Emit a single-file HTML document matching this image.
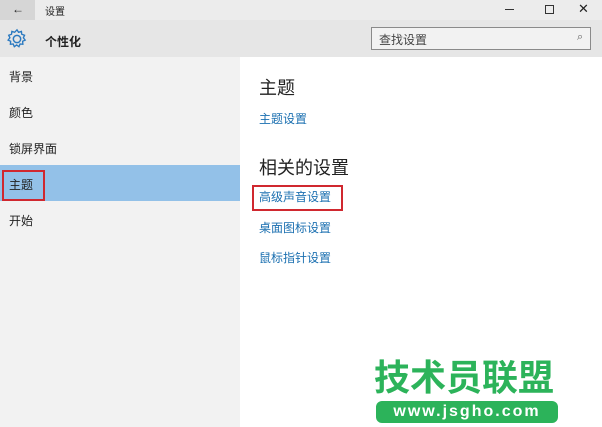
<!DOCTYPE html>
<html><head><meta charset="utf-8"><style>
body{margin:0;width:602px;height:427px;overflow:hidden;position:relative;background:#fff;font-family:"Liberation Sans","Noto Sans CJK SC",sans-serif;}
div{position:absolute;}
.t{font-size:12px;color:#222;white-space:nowrap;}
.l{font-size:12px;color:#1a6fb0;white-space:nowrap;}
</style></head><body>
<div style="left:0;top:0;width:602px;height:20px;background:#ececec"></div>
<div style="left:0;top:0;width:35px;height:20px;background:#d6d6d6"></div>
<div class="t" style="left:12px;top:2px;font-size:12px">←</div>
<div class="t" style="left:45px;top:3px;font-size:10px">设置</div>
<div style="left:505px;top:9px;width:9px;height:1px;background:#333"></div>
<div style="left:545px;top:5px;width:7px;height:7px;border:1px solid #333"></div>
<div class="t" style="left:578px;top:1px;font-size:13px">✕</div>
<div style="left:0;top:20px;width:602px;height:37px;background:#e6e6e6"></div>
<svg style="position:absolute;left:6px;top:28px" width="22" height="22" viewBox="0 0 18 18"><circle cx="9" cy="9" r="3" fill="none" stroke="#2a79c0" stroke-width="1.2"/><path d="M9 1.5l1.3 2 2.3-.7.3 2.3 2.3.8-1 2.1 1.5 1.9-2.1 1 .2 2.4-2.3-.2-.9 2.2-1.9-1.4-1.9 1.4-.9-2.2-2.3.2.2-2.4-2.1-1 1.5-1.9-1-2.1 2.3-.8.3-2.3 2.3.7z" fill="none" stroke="#2a79c0" stroke-width="1.1"/></svg>
<div class="t" style="left:45px;top:33px;font-weight:bold;font-size:12px">个性化</div>
<div style="left:371px;top:27px;width:218px;height:21px;border:1px solid #8a8a8a;background:#f2f2f2"></div>
<div class="t" style="left:379px;top:31px;color:#444">查找设置</div>
<div class="t" style="left:577px;top:31px;color:#666;font-size:11px">⌕</div>
<div style="left:0;top:57px;width:240px;height:370px;background:#f2f2f2"></div>
<div class="t" style="left:9px;top:68px">背景</div>
<div class="t" style="left:9px;top:104px">颜色</div>
<div class="t" style="left:9px;top:140px">锁屏界面</div>
<div style="left:0;top:165px;width:240px;height:36px;background:#93c1e8"></div>
<div style="left:2px;top:170px;width:39px;height:27px;border:2px solid #d0282f"></div>
<div class="t" style="left:9px;top:176px">主题</div>
<div class="t" style="left:9px;top:212px">开始</div>
<div class="t" style="left:259px;top:74px;font-size:18px">主题</div>
<div class="l" style="left:259px;top:110px">主题设置</div>
<div class="t" style="left:259px;top:154px;font-size:18px">相关的设置</div>
<div style="left:252px;top:185px;width:87px;height:22px;border:2px solid #d0282f"></div>
<div class="l" style="left:259px;top:188px">高级声音设置</div>
<div class="l" style="left:259px;top:219px">桌面图标设置</div>
<div class="l" style="left:259px;top:249px">鼠标指针设置</div>
<div style="left:374px;top:358px;font-size:36px;font-weight:bold;color:#2cb35a;letter-spacing:0;white-space:nowrap;line-height:40px">技术员联盟</div>
<div style="left:376px;top:401px;width:182px;height:22px;border-radius:6px;background:#2cb35a;color:#fff;font-size:16px;font-weight:bold;text-align:center;line-height:22px;letter-spacing:2px">www.jsgho.com</div>
</body></html>
